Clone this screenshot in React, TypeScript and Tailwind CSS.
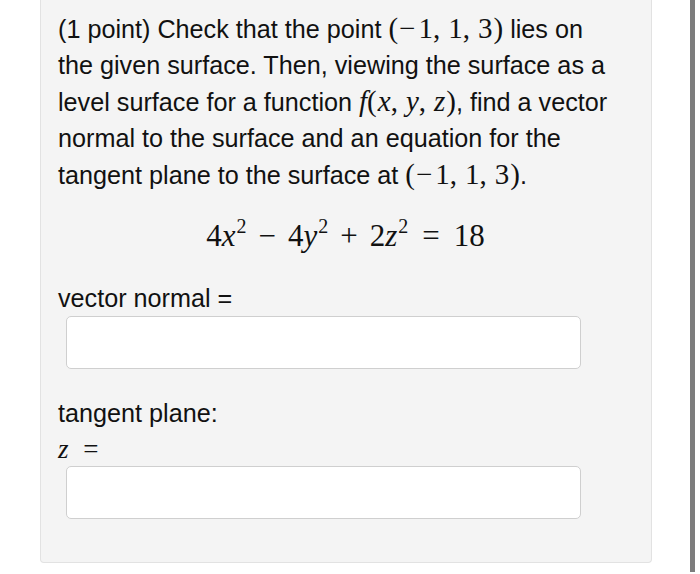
import React from "react";

const M = ({ children }: { children: React.ReactNode }) => (
  <span className="font-['Liberation_Serif','DejaVu_Serif',serif] text-[29px]">{children}</span>
);
const I = ({ children }: { children: React.ReactNode }) => (
  <span className="italic font-['Liberation_Serif',serif]">{children}</span>
);
const C = () => <span className="mr-[8px]">,</span>;
const L = () => <span className="mr-[1px]">(</span>;
const R = () => <span className="ml-[1px]">)</span>;

const Sup = () => (
  <sup className="text-[20px] relative -top-[13px] ml-[1px]">2</sup>
);

export default function App() {
  return (
    <div className="w-[700px] h-[574px] bg-white flex overflow-hidden">
      <div className="ml-[40px] w-[612px] h-[563px] bg-[#f4f4f4] border border-t-0 border-[#e2e2e2] rounded-b-[4px] pl-[17px] pt-[10px] text-[#111] font-['Liberation_Sans',Arial,sans-serif] text-[25.2px] leading-[36px]">
        <div>
          (1 point) Check that the point{" "}
          <M>
            <L />
            <span className="mr-[3px]">−</span>1<C />1<C />3<R />
          </M>{" "}
          lies on
        </div>
        <div>the given surface. Then, viewing the surface as a</div>
        <div>
          level surface for a function{" "}
          <M>
            <I>f</I>
            <L />
            <I>x</I>
            <C />
            <I>y</I>
            <C />
            <I>z</I>
            <R />
          </M>
          , find a vector
        </div>
        <div>normal to the surface and an equation for the</div>
        <div>
          tangent plane to the surface at{" "}
          <M>
            <L />
            <span className="mr-[3px]">−</span>1<C />1<C />3<R />
          </M>
          .
        </div>
        <div className="flex justify-center pr-[18px] mt-[25px] font-['Liberation_Serif','DejaVu_Serif',serif] text-[31px] leading-[36px]">
          <span>
            4<I>x</I>
            <Sup />
            <span className="mx-[12px]">−</span>4<I>y</I>
            <Sup />
            <span className="mx-[12px]">+</span>2<I>z</I>
            <Sup />
            <span className="mx-[14px]">=</span>18
          </span>
        </div>
        <div className="mt-[26px]">vector normal =</div>
        <div className="ml-[8px] mt-[0px] w-[515px] h-[53px] bg-white border-[1.5px] border-[#cfcfcf] rounded-[5px]"></div>
        <div className="mt-[26px]">tangent plane:</div>
        <div className="font-['Liberation_Serif','DejaVu_Serif',serif] text-[27px] leading-[36px] mt-[0px]">
          <I>z</I> <span className="ml-[8px]">=</span>
        </div>
        <div className="ml-[8px] -mt-[1px] w-[515px] h-[53px] bg-white border-[1.5px] border-[#cfcfcf] rounded-[5px]"></div>
      </div>
      <div className="ml-[38px] w-[5px] h-[572px] bg-[#7d7d7d]"></div>
    </div>
  );
}
